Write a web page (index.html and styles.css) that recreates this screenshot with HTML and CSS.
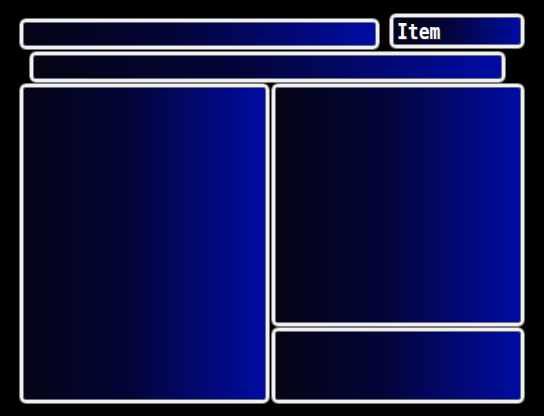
FILE: index.html
```
<!DOCTYPE html>
<html>
<head>
<meta charset="utf-8">
<link rel="stylesheet" href="styles.css">
</head>
<body>
<div class="screen">
  <div class="top-row">
    <div class="win help"></div>
    <div class="win title"><span class="label">Item</span></div>
  </div>
  <div class="win info"></div>
  <div class="main">
    <div class="win list"></div>
    <div class="side">
      <div class="win detail"></div>
      <div class="win stats"></div>
    </div>
  </div>
</div>
</body>
</html>
```
FILE: styles.css
```
html, body {
  margin: 0;
  padding: 0;
  background: #000;
}
.screen {
  width: 544px;
  height: 416px;
  background: #000;
  box-sizing: border-box;
  padding: 14px 0 0 20px;
  display: flex;
  flex-direction: column;
}
.win {
  box-sizing: border-box;
  border: 3px solid #f0f0f0;
  border-radius: 6px;
  box-shadow: 0 0 0 1px #7c7c7c, inset 0 0 0 1px #707080;
  background: linear-gradient(to right, #040414 0%, #03053a 45%, #000ca4 100%);
}
.top-row {
  display: flex;
  gap: 11px;
  align-items: flex-start;
}
.help {
  width: 359px;
  height: 30px;
  margin-top: 5px;
}
.title {
  width: 134px;
  height: 34px;
  display: flex;
  align-items: center;
  padding-left: 4px;
}
.label {
  display: inline-block;
  font-family: "DejaVu Sans Mono", "Liberation Mono", monospace;
  font-size: 18px;
  font-weight: bold;
  color: #fff;
  text-shadow: 1px 1px 0 #2a2a3a;
  line-height: 1;
  margin-top: 1px;
  transform: scaleY(1.15);
}
.info {
  width: 475px;
  height: 30px;
  margin: 3px 0 0 10px;
}
.main {
  display: flex;
  gap: 3px;
  margin-top: 2px;
}
.list {
  width: 249px;
  height: 319px;
}
.side {
  display: flex;
  flex-direction: column;
  gap: 2px;
}
.detail {
  width: 252px;
  height: 242px;
}
.stats {
  width: 252px;
  height: 75px;
}
```
